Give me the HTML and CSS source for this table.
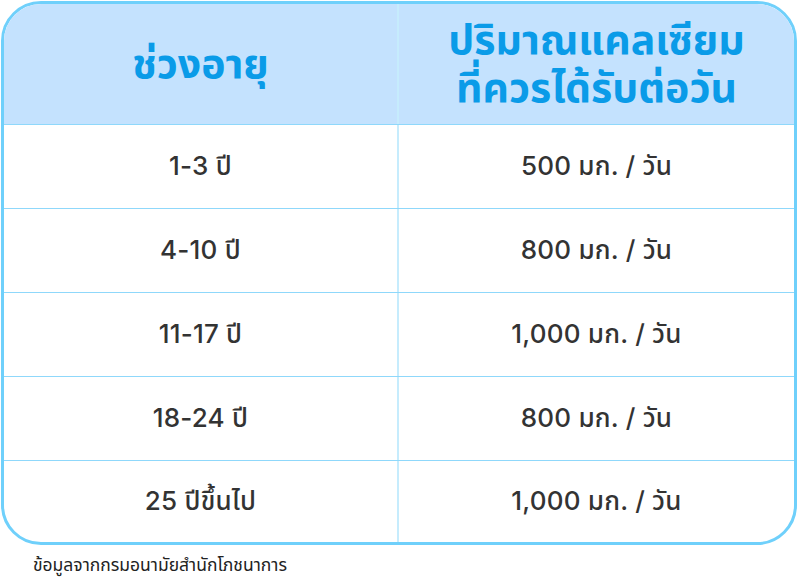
FILE: index.html
```html
<!DOCTYPE html>
<html lang="th">
<head>
<meta charset="utf-8">
<link rel="stylesheet" href="styles.css">
</head>
<body>
<div class="card">
  <div class="row head">
    <div class="cell">ช่วงอายุ</div>
    <div class="cell">ปริมาณแคลเซียม<br>ที่ควรได้รับต่อวัน</div>
  </div>
  <div class="row"><div class="cell">1-3 ปี</div><div class="cell">500 มก. / วัน</div></div>
  <div class="row"><div class="cell">4-10 ปี</div><div class="cell">800 มก. / วัน</div></div>
  <div class="row"><div class="cell">11-17 ปี</div><div class="cell">1,000 มก. / วัน</div></div>
  <div class="row"><div class="cell">18-24 ปี</div><div class="cell">800 มก. / วัน</div></div>
  <div class="row"><div class="cell">25 ปีขึ้นไป</div><div class="cell">1,000 มก. / วัน</div></div>
</div>
<p class="note">ข้อมูลจากกรมอนามัยสำนักโภชนาการ</p>
</body>
</html>
```
FILE: styles.css
```css
html, body { margin: 0; padding: 0; background: #fff; }
body {
  width: 798px; height: 582px; overflow: hidden;
  font-family: "Inter", "Noto Sans", "Noto Sans Thai", sans-serif;
  padding: 1px 0 0 1px; box-sizing: border-box;
}
.card {
  width: 796px; box-sizing: border-box;
  border: 3px solid #6fd0fb;
  border-radius: 40px;
  overflow: hidden;
}
.row {
  display: grid;
  grid-template-columns: 395px 1fr;
  height: 84px;
  border-top: 1px solid #8fd8fb;
  box-sizing: border-box;
}
.row:last-child { height: 82px; }
.row .cell {
  display: flex; align-items: center; justify-content: center;
  text-align: center;
  font-size: 26px; color: #333; font-weight: 500;
  letter-spacing: 0.2px;
}
.row .cell:first-child { border-right: 2px solid #c6ecfd; }
.head {
  border-top: none;
  height: 120px;
  background: #c4e2fe;
}
.head .cell {
  font-family: "Noto Sans", "Noto Sans Thai", sans-serif;
  color: #0a9be8; font-weight: 700; font-size: 41px; line-height: 48px;
  letter-spacing: 0;
  padding-bottom: 4px;
}
.note {
  margin: 7px 0 0 32px;
  font-size: 17.5px; color: #222;
  font-family: "Noto Sans", "Noto Sans Thai", sans-serif;
}
```
